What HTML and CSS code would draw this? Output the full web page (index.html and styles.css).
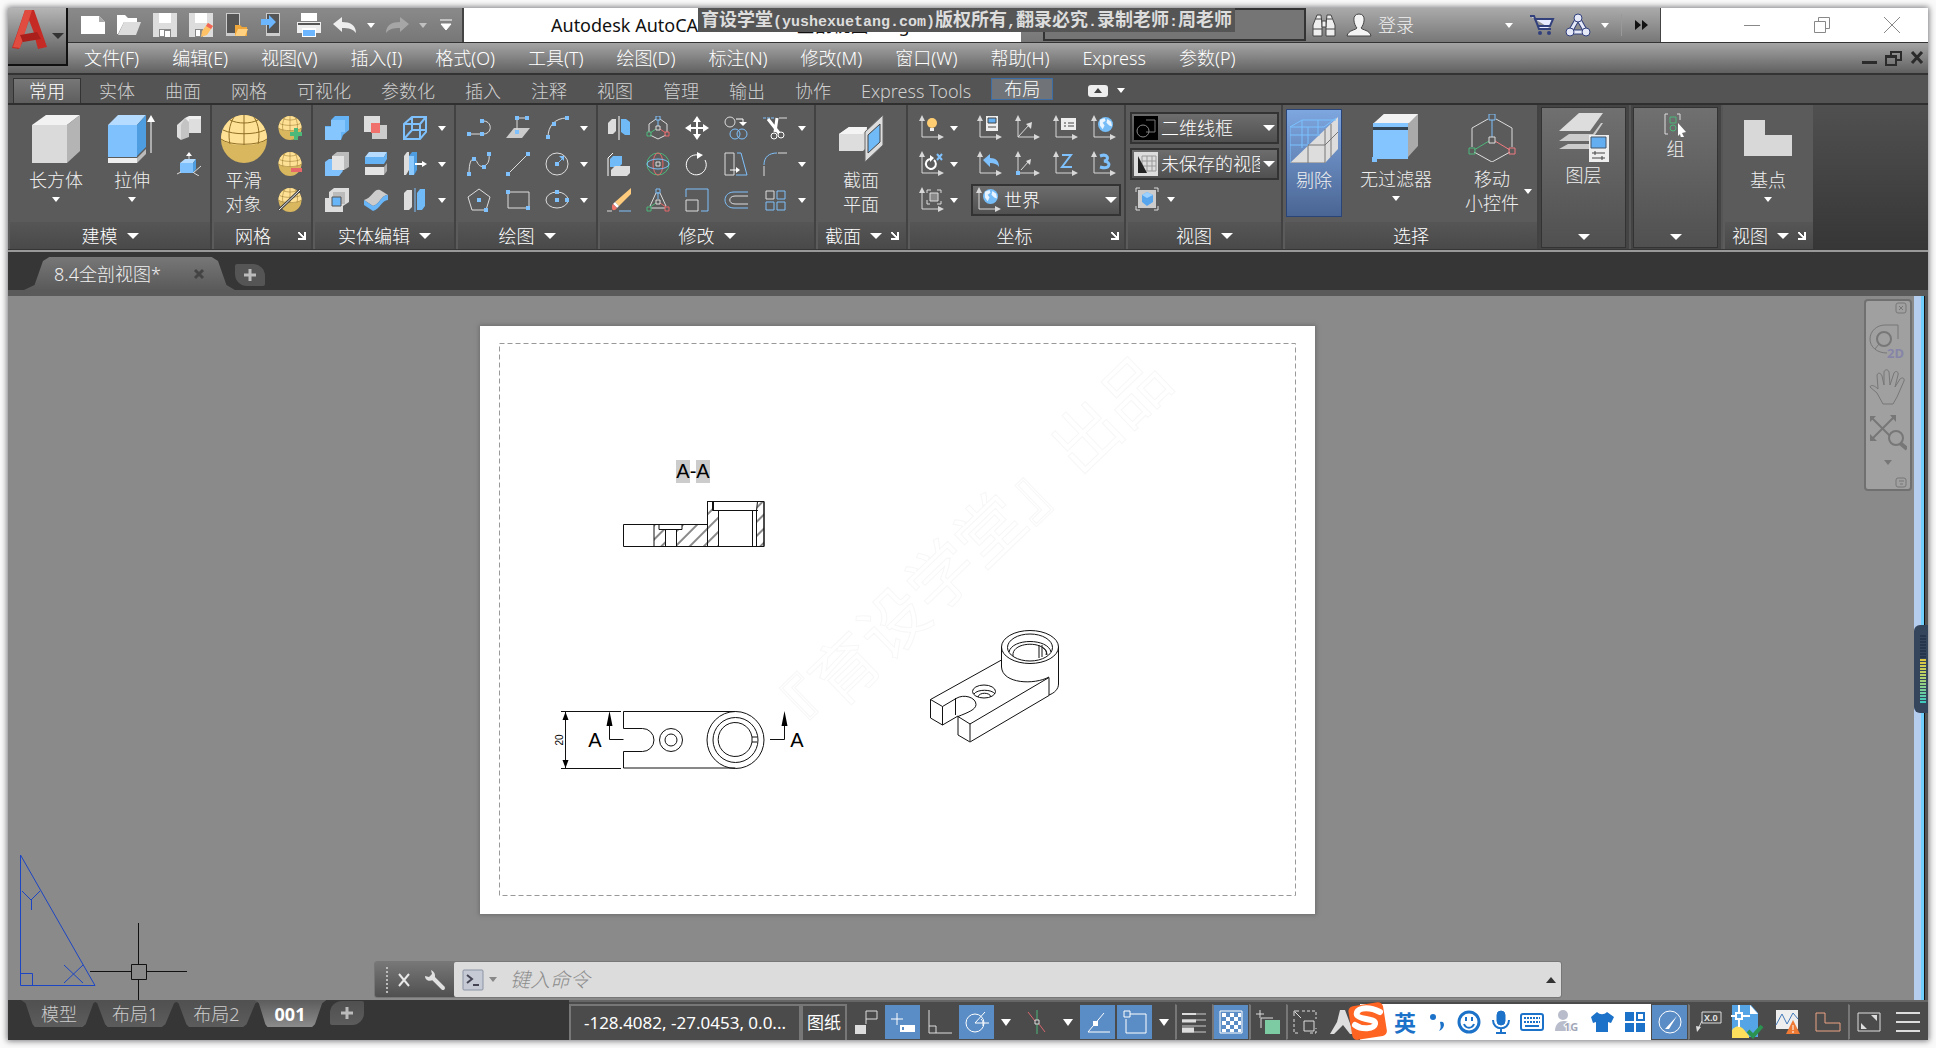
FILE: index.html
```html
<!DOCTYPE html>
<html lang="zh-CN">
<head>
    <meta charset="UTF-8">
    <meta name="viewport" content="width=device-width, initial-scale=1.0">
    <title>Autodesk AutoCAD 2020</title>
    <link rel="stylesheet" href="styles.css">
</head>
<body>
    <!-- shared icon parts -->
    <svg class="defs" width="0" height="0" aria-hidden="true">
        <symbol id="ball" viewBox="0 0 48 48">
            <ellipse cx="24" cy="24" rx="23" ry="24" fill="#d9b75f"/>
            <path d="M1 24C1 10 12 0 24 0s23 10 23 24c-4 4-12 6-23 6S5 28 1 24z" fill="#ffe196"/>
            <path d="M24 0v30M10 5c8 4 20 4 28 0M3 15c10 5 32 5 42 0M1 24c8 7 38 7 46 0M14 2C9 10 8 20 10 29M34 2c5 8 6 18 4 27" fill="none" stroke="#8f6f25" stroke-width="1"/>
        </symbol>
        <symbol id="axes" viewBox="0 0 26 26">
            <path d="M4 5v17h17" fill="none" stroke="#d8d8d8" stroke-width="1"/>
            <path d="M4 0l3 6H1zM26 22l-6-3v6z" fill="#d8d8d8"/>
        </symbol>
        <symbol id="globe" viewBox="0 0 16 16">
            <circle cx="8" cy="8" r="8" fill="#76bdf7"/>
            <path d="M2 3l5-2 1 3-3 2 2 3-2 4-3-4zM10 2l4 3 1 5-3-1-3-3z" fill="#e8f4ff"/>
        </symbol>
    </svg>

    <div class="app">
        <button class="app-menu" aria-label="应用程序菜单">
            <svg width="36" height="42" viewBox="0 0 36 42"><path d="M13 1h9l13 37-9 2-3-11-12 3-4 8-7-1z" fill="#c52b24"/><path d="M17 11l-6 17 11-4z" fill="#8b8b8b"/><path d="M13 1h7L8 39l-7-1z" fill="#e14c40"/><path d="M8 26l17-3 4 7-18 3z" fill="#a81f1c"/></svg>
            <span class="caret dark"></span>
        </button>

        <header class="titlebar">
            <div class="quick">
                <button class="tool" aria-label="新建"><svg width="24" height="24"><path d="M0 3h18l6 6v12H0z" fill="#fff"/><path d="M18 3v6h6z" fill="#aaa"/></svg></button>
                <button class="tool" aria-label="打开"><svg width="24" height="24"><path d="M0 2h8l3 3h9v4H7L1 21H0z" fill="#fff"/><path d="M7 9h17l-5 13H1z" fill="#ddd"/></svg></button>
                <button class="tool" aria-label="保存"><svg width="24" height="24"><path d="M0 0h24v24H0z" fill="#ddd"/><path d="M6 0h12v10H6z" fill="#fff"/><path d="M6 16h12v8H6z" fill="#888"/><path d="M7 17h4v6H7zM12 18h5v6h-5z" fill="#fff"/></svg></button>
                <button class="tool" aria-label="另存为"><svg width="24" height="24"><path d="M0 0h24v24H0z" fill="#ddd"/><path d="M6 0h12v10H6z" fill="#fff"/><path d="M6 16h8v8H6z" fill="#888"/><path d="M7 17h4v6H7z" fill="#fff"/><path d="M19 10l5 3-6 9-6 2 1-6z" fill="#ffc266"/><path d="M19 10l5 3-2 3-5-3z" fill="#f0645a"/></svg></button>
                <button class="tool" aria-label="从移动设备打开"><svg width="24" height="24"><path d="M1 0h14v23H1z" fill="#ccc"/><path d="M2 1h12v19H2z" fill="#555"/><path d="M10 12h5l2 2h5v9H10z" fill="#eea63a"/><path d="M13 16h10l-3 7H10z" fill="#ffd080"/></svg></button>
                <button class="tool" aria-label="保存到移动设备"><svg width="24" height="24"><path d="M5 0h14v23H5z" fill="#ccc"/><path d="M6 1h12v19H6z" fill="#555"/><path d="M0 6h8V2l7 7-7 7v-4H0z" fill="#6bb6ff"/></svg></button>
                <button class="tool" aria-label="打印"><svg width="24" height="24"><path d="M4 0h16v8H4z" fill="#fff"/><path d="M0 9h24v11H0z" fill="#eee"/><path d="M1 10h22v2H1z" fill="#555"/><path d="M5 15h14v9H5z" fill="#fff"/><path d="M6 17h12v6H6z" fill="#6bb6ff"/></svg></button>
                <button class="tool" aria-label="放弃"><svg width="24" height="24"><path d="M0 11l9-7v5c8 0 14 3 14 11-3-4-7-5-14-5v4z" fill="#eee"/></svg></button>
                <span class="caret"></span>
                <button class="tool" aria-label="重做"><svg width="24" height="24"><path d="M24 11l-9-7v5C7 9 1 12 1 20c3-4 7-5 14-5v4z" fill="#a6a6a6"/></svg></button>
                <span class="caret dim"></span>
                <button class="tool narrow" aria-label="自定义快速访问工具栏"><svg width="12" height="14"><path d="M0 2h12M1 6h10l-5 6z" stroke="#fff" fill="#fff"/></svg></button>
            </div>
            <h1 class="title">Autodesk AutoCAD 2020&nbsp;&nbsp; 8.4全剖视图.dwg</h1>
            <div class="search"><input type="search" aria-label="搜索"></div>
            <div class="account">
                <button class="tool" aria-label="查找"><svg width="24" height="24"><g fill="#eee" stroke="#444"><path d="M5 2h4l1 9v12H1V12zM19 2h-4l-1 9v12h9V12z"/><path d="M10 8h4v6h-4zM1 16h9M14 16h9M4 6h6M14 6h6" /></g></svg></button>
                <button class="login"><svg width="26" height="24"><path d="M13 1c8 0 5 11 2 14 1 2 9 2 10 8H1c1-6 9-6 10-8C8 12 5 1 13 1z" fill="#f4f4f4" stroke="#444"/></svg>登录</button>
                <span class="caret push"></span>
                <button class="tool" aria-label="应用商店"><svg width="26" height="24"><path d="M1 3h4l5 13h12M6 6h18l-3 7H9z" fill="#e8ebff" stroke="#32407c" stroke-width="2"/><circle cx="11" cy="20" r="2" fill="#32407c"/><circle cx="20" cy="20" r="2" fill="#32407c"/></svg></button>
                <button class="tool" aria-label="A360"><svg width="26" height="24" fill="none"><path d="M13 5L5 19h16z" stroke="#32407c" stroke-width="5" stroke-linejoin="round"/><path d="M13 5L5 19h16z" stroke="#e6e9f7" stroke-width="3" stroke-linejoin="round"/><g fill="#e6e9f7" stroke="#32407c"><circle cx="13" cy="5" r="4"/><circle cx="5" cy="19" r="4"/><circle cx="21" cy="19" r="4"/></g></svg></button>
                <span class="caret"></span>
                <span class="rule"></span>
                <button class="tool" aria-label="更多"><svg width="14" height="10"><path d="M1 0l6 5-6 5zM8 0l6 5-6 5z" fill="#111"/></svg></button>
            </div>
            <div class="window-buttons">
                <button aria-label="最小化"><svg width="16" height="16"><path d="M0 8.500h16" stroke="#888"/></svg></button>
                <button aria-label="还原"><svg width="16" height="16"><path d="M.5 4.500h11v11H.5zM4.500 4V.5h11v11H12" fill="none" stroke="#888"/></svg></button>
                <button aria-label="关闭"><svg width="16" height="16"><path d="M0 0l16 16M16 0L0 16" stroke="#888"/></svg></button>
            </div>
        </header>
        <p class="notice">育设学堂<span>(yushexuetang.com)</span>版权所有<span>,</span>翻录必究<span>.</span>录制老师<span>:</span>周老师</p>

        <nav class="menubar">
            <button>文件(F)</button><button>编辑(E)</button><button>视图(V)</button><button>插入(I)</button><button>格式(O)</button><button>工具(T)</button><button>绘图(D)</button><button>标注(N)</button><button>修改(M)</button><button>窗口(W)</button><button>帮助(H)</button><button>Express</button><button>参数(P)</button>
            <div class="doc-buttons">
                <button aria-label="最小化文档"><svg width="16" height="16"><path d="M0 11h15v3H0z" fill="#2b2b2b"/></svg></button>
                <button aria-label="还原文档"><svg width="18" height="16"><path d="M1 6h10v9H1zM6 6V2h10v8h-4M1 7h10M6 2h10" fill="none" stroke="#2b2b2b" stroke-width="2"/></svg></button>
                <button aria-label="关闭文档"><svg width="14" height="16"><path d="M2 2l10 11M12 2L2 13" stroke="#2b2b2b" stroke-width="3"/></svg></button>
            </div>
        </nav>

        <nav class="tabs">
            <button class="current">常用</button><button>实体</button><button>曲面</button><button>网格</button><button>可视化</button><button>参数化</button><button>插入</button><button>注释</button><button>视图</button><button>管理</button><button>输出</button><button>协作</button><button>Express Tools</button><button class="context">布局</button>
            <button class="fold" aria-label="最小化功能区"><svg width="22" height="12"><rect width="20" height="12" rx="3" fill="#eee"/><path d="M10 3l4 5H6z" fill="#444"/></svg><span class="caret"></span></button>
        </nav>

        <div class="ribbon">
            <section class="panel modeling">
                <div class="panel-body">
                    <button class="big"><svg width="48" height="48"><path d="M0 10L14 0h34L35 10z" fill="#f2f2f2"/><path d="M0 10h35v38H0z" fill="#dadada"/><path d="M35 10L48 0v36L35 48z" fill="#b4b4b4"/></svg>长方体<span class="caret"></span></button>
                    <button class="big"><svg width="48" height="48"><path d="M0 10L10 0h28L29 10z" fill="#b5dcff"/><path d="M0 10h29v32H0z" fill="#7fc1fc"/><path d="M29 10l9-10v32l-9 9z" fill="#4e9de0"/><path d="M0 43h29v5H0z" fill="#eee"/><path d="M29 43l9-9v5l-9 9z" fill="#bbb"/><path d="M43 6v32" stroke="#fff" stroke-width="1"/><path d="M43 0l4 7h-8z" fill="#fff"/></svg>拉伸<span class="caret"></span></button>
                    <div class="icons one">
                        <button class="tool" aria-label="多段体"><svg width="24" height="24"><path d="M0 9l8-7v12L4 17v7l-4-3z" fill="#ddd"/><path d="M8 2L12 0h12v13H8z" fill="#efefef"/><path d="M8 2l4 4v15l-8 3V9z" fill="#c4c4c4"/><path d="M12 3h12v14H12z" fill="#dedede"/></svg></button>
                        <button class="tool" aria-label="按住并拖动"><svg width="24" height="24"><path d="M3 11l5-4h11l-3 4z" fill="#b5dcff"/><path d="M3 11h13v10H3z" fill="#7fc1fc"/><path d="M16 11l3-4v10l-3 4z" fill="#4e9de0"/><path d="M12 7V2M0 22l4-2M16 21l8-7M17 21l5 3" stroke="#ddd"/><path d="M12 0l3 4H9z" fill="#fff"/></svg></button>
                    </div>
                </div>
                <footer>建模 <span class="caret"></span></footer>
            </section>
            <section class="panel mesh">
                <div class="panel-body">
                    <button class="big"><svg width="48" height="48"><use href="#ball"/></svg><span>平滑<br>对象</span></button>
                    <div class="icons one">
                        <button class="tool" aria-label="提高平滑度"><svg width="24" height="24"><use href="#ball"/><path d="M18 12v12M12 18h12" stroke="#4cb87a" stroke-width="4"/></svg></button>
                        <button class="tool" aria-label="降低平滑度"><svg width="24" height="24"><use href="#ball"/><path d="M13 18h11" stroke="#e8686a" stroke-width="4"/></svg></button>
                        <button class="tool" aria-label="取消平滑"><svg width="24" height="24"><use href="#ball"/><path d="M1 22L22 2" stroke="#444" stroke-width="3"/><path d="M1 22L22 2" stroke="#eee"/></svg></button>
                    </div>
                </div>
                <footer class="ends">网格 <span class="end"><button class="launcher" aria-label="网格选项"></button></span></footer>
            </section>
            <section class="panel solid">
                <div class="panel-body">
                    <div class="icons three">
                        <button class="tool" aria-label="并集"><svg width="24" height="24"><path d="M6 4l4-4h14v14l-6 5-2 5H0V10h6z" fill="#65b2f5"/><path d="M6 4h14v12h-4v8H0V11h6z" fill="#86c6ff"/></svg></button>
                        <button class="tool" aria-label="干涉"><svg width="24" height="24"><path d="M0 0h16v16H0z" fill="#ddd"/><path d="M8 9h15v14H8z" fill="#ccc"/><path d="M7 7h9v10H7z" fill="#f0706c"/></svg></button>
                        <button class="tool" aria-label="提取边"><svg width="24" height="24"><path d="M1 8l8-7h14v15l-6 7H1zM1 8h16v15M17 8l6-7M9 1v13L1 23M9 14h14" fill="none" stroke="#7fc1fc" stroke-width="2"/></svg></button>
                        <span class="caret"></span>
                        <button class="tool" aria-label="差集"><svg width="24" height="24"><path d="M0 10l4-3h8l6 12-4 5H0z" fill="#7fc1fc"/><path d="M7 4l5-4h12v15l-5 3H7z" fill="#bbb"/><path d="M7 4h12v14H7z" fill="#e3e3e3"/></svg></button>
                        <button class="tool" aria-label="剖切"><svg width="24" height="24"><path d="M1 5l4-5h18l-3 5z" fill="#b5dcff"/><path d="M1 5h19v7H1zM20 5l3-5v7l-3 5z" fill="#65b2f5"/><path d="M1 15h19v8H1z" fill="#e3e3e3"/><path d="M20 15l3-4v8l-3 4z" fill="#aaa"/></svg></button>
                        <button class="tool" aria-label="拉伸面"><svg width="24" height="24"><path d="M1 4l3-4h2v18l-3 5H1z" fill="#ddd"/><path d="M6 4l3-4h5v18l-3 5H6z" fill="#4e9de0"/><path d="M6 4h5v19H6z" fill="#8bc9ff"/><path d="M12 12h8" stroke="#fff" stroke-width="2"/><path d="M19 9l5 3-5 3z" fill="#fff"/></svg></button>
                        <span class="caret"></span>
                        <button class="tool" aria-label="交集"><svg width="24" height="24"><path d="M0 10h4V4l5-4h15v14l-6 4v6H0z" fill="#ddd"/><path d="M8 4h12v12H8z" fill="#bbb"/><path d="M7 9h9v9H7z" fill="#68b5f7" stroke="#555"/></svg></button>
                        <button class="tool" aria-label="加厚"><svg width="24" height="24"><path d="M0 12C8 10 10 0 16 2l8 5C18 6 16 16 9 18z" fill="#ccc"/><path d="M0 12l9 6C16 16 18 6 24 7v5c-6 0-8 9-15 11L0 17z" fill="#68b5f7"/></svg></button>
                        <button class="tool" aria-label="分割"><svg width="24" height="24"><path d="M1 5l3-3h5v17l-3 3H1z" fill="#ddd"/><path d="M14 5l3-4h5v17l-3 4h-5z" fill="#70baf8"/><path d="M12 0v24" stroke="#7fc1fc"/></svg></button>
                        <span class="caret"></span>
                    </div>
                </div>
                <footer>实体编辑 <span class="caret"></span></footer>
            </section>
            <section class="panel draw">
                <div class="panel-body">
                    <div class="icons three line">
                        <button class="tool" aria-label="多段线"><svg width="24" height="24"><path d="M1 18h14M15 5c11-1 11 14 0 13"/><path class="dot" d="M0 16h4v4H0zM13 16h4v4h-4zM13 3h4v4h-4z"/></svg></button>
                        <button class="tool" aria-label="三维多段线"><svg width="24" height="24"><path d="M8 12h16l-8 10H0z" fill="#ccc" stroke="none"/><path d="M11 16V2h10"/><path class="dot" d="M9 0h4v4H9zM19 0h4v4h-4zM9 14h4v4H9z"/></svg></button>
                        <button class="tool" aria-label="圆弧"><svg width="24" height="24"><path d="M3 21C3 10 10 2 22 2"/><path class="dot" d="M1 19h4v4H1zM7 6h4v4H7zM20 0h4v4h-4z"/></svg></button>
                        <span class="caret"></span>
                        <button class="tool" aria-label="样条曲线"><svg width="24" height="24"><path d="M2 22C2 3 8 6 10 10s4 5 7 4 6-4 5-12"/><path class="dot" d="M0 20h4v4H0zM5 5h4v4H5zM15 13h4v4h-4zM20 0h4v4h-4z"/></svg></button>
                        <button class="tool" aria-label="直线"><svg width="24" height="24"><path d="M2 22L22 2"/><path class="dot" d="M0 20h4v4H0zM20 0h4v4h-4z"/></svg></button>
                        <button class="tool" aria-label="圆"><svg width="24" height="24"><circle cx="12" cy="12" r="11"/><path d="M13 11l5-5" stroke="#7fc1fc"/><path class="dot" d="M10 10h4v4h-4zM19 4v5l-5-5z"/></svg></button>
                        <span class="caret"></span>
                        <button class="tool" aria-label="多边形"><svg width="24" height="24"><path d="M12 1l11 8-4 13H5L1 9z"/><path class="dot" d="M10 10h4v4h-4zM17 20h4v4h-4z"/></svg></button>
                        <button class="tool" aria-label="矩形"><svg width="24" height="24"><path d="M2 4h21v16H2z"/><path class="dot" d="M0 2h4v4H0zM20 18h4v4h-4z"/></svg></button>
                        <button class="tool" aria-label="椭圆"><svg width="24" height="24"><ellipse cx="12" cy="12" rx="11" ry="8"/><path class="dot" d="M10 2h4v4h-4zM10 10h4v4h-4zM20 10h4v4h-4z"/></svg></button>
                        <span class="caret"></span>
                    </div>
                </div>
                <footer>绘图 <span class="caret"></span></footer>
            </section>
            <section class="panel modify">
                <div class="panel-body">
                    <div class="icons five line">
                        <button class="tool" aria-label="三维镜像"><svg width="24" height="24"><g stroke="none"><path d="M1 7l4-4h4v12l-3 3H1z" fill="#ddd"/><path d="M14 3h5l4 3v13h-5l-4-3z" fill="#70baf8"/></g><path d="M12 0v24" stroke="#fff"/></svg></button>
                        <button class="tool" aria-label="三维移动"><svg width="24" height="24"><path d="M10 3L3 8v8M14 3l7 5v8M4 19l8 4 8-4"/><path d="M12 4v6M10 0h4v4h-4z" stroke="#7fc1fc"/><path d="M10 13l-6 4M1 16h4v4H1z" stroke="#4cb87a"/><path d="M14 13l6 4M19 16h4v4h-4z" stroke="#e8686a"/><path d="M10 10h4v4h-4z"/></svg></button>
                        <button class="tool" aria-label="移动"><svg width="24" height="24"><path d="M12 3v18M3 12h18" stroke="#fff" stroke-width="2"/><path d="M12 0l4 6H8zM12 24l4-6H8zM0 12l6-4v8zM24 12l-6-4v8z" fill="#fff" stroke="none"/></svg></button>
                        <button class="tool" aria-label="复制"><svg width="24" height="24"><circle cx="6" cy="6" r="5"/><path d="M12 3h7v4" stroke="#fff"/><path d="M19 10l-4-4h8z" fill="#fff" stroke="none"/><g stroke="#7fc1fc"><circle cx="11" cy="18" r="5"/><circle cx="18" cy="18" r="5"/></g></svg></button>
                        <button class="tool" aria-label="修剪"><svg width="24" height="24"><path d="M0 2h12" stroke="#7fc1fc" stroke-dasharray="3 1"/><path d="M16 2h8"/><path d="M5 3l11 14M14 2l-2 14" stroke="#fff" stroke-width="3"/><circle cx="11" cy="20" r="3" stroke="#fff"/><circle cx="18" cy="19" r="3" stroke="#fff"/></svg></button>
                        <span class="caret"></span>
                        <button class="tool" aria-label="三维对齐"><svg width="24" height="24"><g stroke="none"><path d="M3 7l3-3h9v8l-3 3H3z" fill="#70baf8"/><path d="M4 18l4-4h15v7l-3 3H4z" fill="#ddd"/></g><path d="M1 24V6l5-5" stroke="#fff"/></svg></button>
                        <button class="tool" aria-label="三维旋转"><svg width="24" height="24"><circle cx="12" cy="12" r="11" stroke="#4cb87a"/><ellipse cx="12" cy="12" rx="5" ry="11" stroke="#e8686a"/><ellipse cx="12" cy="12" rx="11" ry="5" stroke="#7fc1fc"/><path d="M10 10h4v4h-4z"/></svg></button>
                        <button class="tool" aria-label="旋转"><svg width="24" height="24"><path d="M20 8a10 10 0 1 1-7-5" stroke="#fff"/><path d="M12 0l6 3-6 4z" fill="#fff" stroke="none"/></svg></button>
                        <button class="tool" aria-label="拉伸图形"><svg width="24" height="24"><path d="M1 1h9v22H1z"/><path d="M13 1h4l6 22H12" stroke="#7fc1fc"/><path d="M6 18h7" stroke="#fff"/><path d="M12 15l4 3-4 3z" fill="#fff" stroke="none"/></svg></button>
                        <button class="tool" aria-label="圆角"><svg width="24" height="24"><path d="M1 14v10M15 1h9"/><path d="M1 13C1 5 6 1 14 1" stroke="#7fc1fc"/></svg></button>
                        <span class="caret"></span>
                        <button class="tool" aria-label="删除"><svg width="24" height="24"><g stroke="none"><path d="M24 0v6L12 18l-4-4z" fill="#ffcb7d"/><path d="M8 14l4 4-2 2-4-4z" fill="#fff"/><path d="M6 16l4 4c-2 3-5 3-5 0s0-3 1-4z" fill="#ef7469"/></g><path d="M0 23h5"/><path d="M12 23h12" stroke="#7fc1fc"/></svg></button>
                        <button class="tool" aria-label="三维缩放"><svg width="24" height="24"><path d="M10 5L4 18M14 5l6 13M5 20h14"/><path d="M12 4v7M10 1h4v4h-4z" stroke="#7fc1fc"/><path d="M10 15l-6 4M1 19h4v4H1z" stroke="#4cb87a"/><path d="M14 15l6 4M19 19h4v4h-4z" stroke="#e8686a"/><path d="M10 12h4v4h-4z"/></svg></button>
                        <button class="tool" aria-label="缩放"><svg width="24" height="24"><path d="M1 12h12v11H1z"/><path d="M1 9V1h22v22h-7" stroke="#7fc1fc"/></svg></button>
                        <button class="tool" aria-label="偏移"><svg width="24" height="24"><path d="M24 4H10C-2 4-2 20 10 20h14" stroke="#7fc1fc"/><path d="M24 8H11C4 8 4 16 11 16h13"/></svg></button>
                        <button class="tool" aria-label="阵列"><svg width="24" height="24"><path d="M3 3h8v8H3z"/><path d="M14 3h8v8h-8zM3 14h8v8H3zM14 14h8v8h-8z" stroke="#7fc1fc"/></svg></button>
                        <span class="caret"></span>
                    </div>
                </div>
                <footer>修改 <span class="caret"></span></footer>
            </section>
            <section class="panel section-plane">
                <div class="panel-body">
                    <button class="big"><svg width="48" height="48"><path d="M2 19l10-7h18v20l-4 4H2z" fill="#ddd"/><path d="M2 19l10-7h18l-4 7z" fill="#f4f4f4"/><path d="M28 17L46 0v30L28 47z" fill="#ddd" stroke="#666"/><path d="M31 20L43 9v18L31 38z" fill="#70baf8" stroke="#444"/></svg><span>截面<br>平面</span></button>
                </div>
                <footer>截面 <span class="caret"></span> <button class="launcher" aria-label="截面选项"></button></footer>
            </section>
            <section class="panel ucs">
                <div class="panel-body">
                    <div class="icons coords">
                        <button class="tool" aria-label="UCS 图标"><svg width="26" height="26"><use href="#axes"/><circle cx="14" cy="8" r="5" fill="#ffce73"/><path d="M12 13h4v3h-4z" fill="#eee"/></svg></button>
                        <span class="caret"></span>
                        <button class="tool" aria-label="UCS 特性"><svg width="26" height="26"><use href="#axes"/><path d="M10 1h12v15H10z" fill="#eee"/><path d="M12 3h8v5h-8z" fill="#62aef0" stroke="#444"/><path d="M12 12h8" stroke="#444"/></svg></button>
                        <button class="tool" aria-label="原点"><svg width="26" height="26"><use href="#axes"/><path d="M4 22l11-12" stroke="#ddd"/><path d="M18 7l-1 7-5-5z" fill="#ddd"/></svg></button>
                        <button class="tool" aria-label="命名 UCS"><svg width="26" height="26"><use href="#axes"/><path d="M9 3h15v12H9z" fill="#eee"/><path d="M12 8h2M16 8h6M12 11h2M16 11h6" stroke="#444"/></svg></button>
                        <button class="tool" aria-label="世界坐标"><svg width="26" height="26"><use href="#axes"/><use href="#globe" x="8" y="2" width="15" height="15"/></svg></button>
                        <button class="tool" aria-label="绕 X 轴旋转"><svg width="26" height="26"><use href="#axes"/><path d="M16 9a5 5 0 1 1-4-1" fill="none" stroke="#fff" stroke-width="2"/><path d="M12 4l4 3-4 4z" fill="#fff"/><path d="M19 3l5 6M24 3l-5 6" stroke="#7fc1fc" stroke-width="2"/></svg></button>
                        <span class="caret"></span>
                        <button class="tool" aria-label="上一个 UCS"><svg width="26" height="26"><use href="#axes"/><path d="M7 9l7-6v4c6 0 9 3 9 9-2-3-5-4-9-4v4z" fill="#7fc1fc"/></svg></button>
                        <button class="tool" aria-label="Z 轴矢量"><svg width="26" height="26"><use href="#axes"/><path d="M7 19l8-9" stroke="#ddd"/><path d="M17 8l-1 6-4-4z" fill="#ddd"/><path d="M2 20h4v4H2z" fill="#7fc1fc"/></svg></button>
                        <button class="tool" aria-label="Z"><svg width="26" height="26"><use href="#axes"/><path d="M10 4h9L10 16h10" fill="none" stroke="#7fc1fc" stroke-width="2"/></svg></button>
                        <button class="tool" aria-label="三点"><svg width="26" height="26"><use href="#axes"/><path d="M10 5c8-3 10 4 4 5 8 1 6 9-4 6" fill="none" stroke="#7fc1fc" stroke-width="3"/></svg></button>
                        <button class="tool" aria-label="视图 UCS"><svg width="26" height="26"><use href="#axes"/><path d="M12 6h8v8h-8z" fill="#888" stroke="#ddd"/><path d="M9 6V3h4M19 3h4v3M23 14v3h-4M9 13v4h3" fill="none" stroke="#ddd"/></svg></button>
                        <span class="caret"></span>
                        <div class="combo"><svg width="26" height="26"><use href="#axes"/><use href="#globe" x="8" y="2" width="15" height="15"/></svg><select aria-label="坐标系"><option>世界</option></select><span class="caret"></span></div>
                    </div>
                </div>
                <footer class="ends">坐标 <span class="end"><button class="launcher" aria-label="坐标选项"></button></span></footer>
            </section>
            <section class="panel view">
                <div class="panel-body">
                    <div class="combo"><svg width="24" height="24"><path d="M0 0h24v24H0z"/><path d="M12 4h9v12h-9" fill="none" stroke="#777"/><circle cx="9" cy="15" r="6" fill="none" stroke="#888"/></svg><select aria-label="视觉样式"><option>二维线框</option></select><span class="caret"></span></div>
                    <div class="combo"><svg width="24" height="24"><path d="M0 0h24v24H0z" fill="#ddd"/><path d="M8 4h14v15H8zM8 9h14M8 14h14M13 4v15M18 4v15" fill="none" stroke="#999"/><path d="M4 4v17h9z" fill="#222"/></svg><select aria-label="已保存的视图"><option>未保存的视图</option></select><span class="caret"></span></div>
                    <div class="with-caret"><button class="tool" aria-label="视口配置"><svg width="24" height="24"><path d="M1 5V1h4M19 1h4v4M23 19v4h-4M5 23H1v-4" fill="none" stroke="#ddd"/><path d="M3 3h18v18H3z" fill="#ccc"/><path d="M7 8l5-3 6 3v7l-6 4-5-4z" fill="#57a6ed"/><path d="M7 8l5-3 6 3-6 3z" fill="#9cd1ff"/></svg></button><span class="caret"></span></div>
                </div>
                <footer>视图 <span class="caret"></span></footer>
            </section>
            <section class="panel selection">
                <div class="panel-body">
                    <button class="big pressed"><svg width="48" height="48"><path d="M0 48L48 2v32L35 48z" fill="#ddd"/><path d="M18 30v18M0 48h35V14M18 30h17M35 30L48 17M41 9v33" stroke="#777" fill="none"/><path d="M0 48V12L12 5h34M0 12h34L46 3M18 12v17M0 30h18M0 20h30M12 5v28M28 5v14" stroke="#7ac2ff" fill="none"/></svg>剔除</button>
                    <button class="big"><svg width="48" height="48"><path d="M2 9l10-9h34v32L36 43H2z" fill="#aaa"/><path d="M2 9l10-9h34l-9 9z" fill="#f2f2f2"/><path d="M1 9h35v36H1z" fill="#84c5ff"/><path d="M1 13h35v3H1z" fill="#345"/><path d="M0 43h5v5H0z" fill="#7fc1fc"/></svg>无过滤器<span class="caret"></span></button>
                    <button class="big gizmo"><svg width="48" height="48" fill="none" stroke="#ddd"><path d="M20 5L4 14v19M28 5l16 9v19M6 38l18 10 18-10"/><path d="M24 6v17M21 0h6v6h-6z" stroke="#7fc1fc"/><path d="M21 27L6 36M1 34h6v6H1z" stroke="#4cb87a"/><path d="M27 27l15 9M41 34h6v6h-6z" stroke="#f07a80"/><path d="M21 23h6v6h-6z"/></svg><span>移动<br>小控件</span><span class="caret"></span></button>
                </div>
                <footer>选择</footer>
            </section>
            <section class="panel folded">
                <button><svg width="50" height="50"><path d="M20 0h24L31 18H0z" fill="#ddd"/><path d="M10 21h24l8-11h2L32 28H0zM9 31h25v5H0z" fill="#ccc"/><path d="M30 22h20v27H30z" fill="#eee"/><path d="M32 24h15v11H32z" fill="#62aef0" stroke="#456"/><path d="M33 40h13M33 45h13M36 38v4M43 43v4" stroke="#444"/></svg>图层<span class="caret"></span></button>
            </section>
            <section class="panel folded">
                <button><svg width="24" height="24"><path d="M4 1H1v20h3M13 1h3v6" fill="none" stroke="#ddd"/><path d="M6 4h6v6H6z" fill="none" stroke="#4cb87a"/><circle cx="9" cy="15" r="3" fill="none" stroke="#4cb87a"/><path d="M14 10l8 9-4 1 2 4-3 1-1-4-2 2z" fill="#fff"/></svg>组<span class="caret"></span></button>
            </section>
            <section class="panel base">
                <div class="panel-body">
                    <button class="big"><svg width="48" height="48"><path d="M0 5h21v15h27v21H0z" fill="#d8d8d8"/></svg>基点<span class="caret"></span></button>
                </div>
                <footer>视图 <span class="caret"></span> <button class="launcher" aria-label="视图选项"></button></footer>
            </section>
        </div>

        <div class="file-tabs">
            <div class="file-tab"><button>8.4全剖视图*</button><button class="close" aria-label="关闭图形"><svg width="12" height="12"><path d="M2 2l8 8M10 2l-8 8" stroke="#444" stroke-width="3"/></svg></button></div>
            <button class="new-tab" aria-label="新图形"><svg width="12" height="12"><path d="M6 0v12M0 6h12" stroke="#bbb" stroke-width="3"/></svg></button>
        </div>

        <main class="canvas">
            <svg class="paper" width="835" height="588" viewBox="480 326 835 588" fill="none" stroke="#111">
                <defs>
                    <pattern id="hatch" width="10" height="10" patternUnits="userSpaceOnUse" patternTransform="rotate(45)"><path d="M4 0v10" stroke="#111"/></pattern>
                </defs>
                <rect x="480" y="326" width="835" height="588" fill="#fff" stroke="none"/>
                <text class="stamp" transform="translate(845 670) rotate(-44)" x="-100" y="24">『育设学堂』出品</text>
                <rect x="499.500" y="343.500" width="796" height="552" stroke="#999" stroke-dasharray="5 3"/>

                <!-- section A-A -->
                <path d="M676 460h14v23h-14zM696 460h14v23h-14z" fill="#ccc" stroke="none"/>
                <text class="mark" x="693" y="478">A-A</text>
                <path d="M654 524.500h5v5h6.500v17H654zM682 524.500h25.500v22H676.500v-17h5.500zM707.500 501.500h5v9h6v36h-11zM757.500 501.500h6.500v45h-7.500v-36z" fill="url(#hatch)"/>
                <path d="M623.500 524.500h84v-23H764v45H623.500zM659.500 529.500h22.500M713.500 501.500v9h44.500M752.500 510.500v36M707.500 524.500v22"/>

                <!-- plan -->
                <path d="M735.500 711.500H623.500v17h19a11.500 11.500 0 0 1 0 23h-19v16.500h112"/>
                <circle cx="671" cy="740" r="11.500"/><circle cx="671" cy="740" r="6"/>
                <circle cx="735.500" cy="740" r="28.500"/><circle cx="735.500" cy="740" r="22.500"/>
                <path d="M752 737a17 17 0 1 0 0 5h5M752 737h5M752 737v5"/>
                <path d="M561 711.500h60M561 768.500h60M565.500 712v56M609.500 715v24.500h14M784.500 715v24.500H770"/>
                <path d="M565.500 712l3 8h-6zM565.500 768l3-8h-6zM609.500 711l3 15h-6zM784.500 711l3 15h-6z" fill="#000" stroke="none"/>
                <text class="mark" x="595" y="747">A</text>
                <text class="mark" x="797" y="747">A</text>
                <text class="size" transform="translate(563 740) rotate(-90)">20</text>

                <!-- isometric -->
                <ellipse cx="1030" cy="647" rx="28.500" ry="16.500"/><ellipse cx="1030" cy="647.500" rx="22.500" ry="13.500"/>
                <path d="M1009 652c3-14 39-14 42 0M1013 656c-2-15 34-16 34-1M1039 645v13M1042 645v12M1043 648c3 1 4 4 3 7M1001.500 647v20c1 17 33 18 47.500 10M1058.500 647v37c0 5-4 9-9.500 11"/>
                <path d="M1001.500 660l-71 39.500 12 7 13.500-8c8-5 20-1 20 6 0 5-8 8-18 12l12 7.500 79-46.500v18l-79 46.500-12-7v-19M970 723.500V741M930.500 699.500V718l12 7v-18.500M942.500 725l15.500-9M955.500 698v17"/>
                <ellipse cx="984" cy="691.500" rx="11.500" ry="6.500"/><path d="M974 694c3-5 18-5 21 0M978 697c1-5 12-5 13 0"/>
            </svg>

            <svg class="ucs-icon" width="190" height="160" viewBox="8 840 190 160" fill="none">
                <path d="M20.500 855v130.500H95zM20.500 973.500h12v12M22 891l9 9 9-9M31.500 900v10M64 965l19 18M83 965l-19 18" stroke="#1c45c4"/>
                <path d="M138.500 923v41M138.500 979v21M90 971.500h41M146 971.500h41M131.500 964.500h15v15h-15z" stroke="#111"/>
            </svg>

            <aside class="navbar">
                <button class="mini" aria-label="关闭导航栏"><svg width="12" height="12"><rect x="1" y="1" width="10" height="10" rx="2" fill="none" stroke="#777"/><path d="M4 4l4 4M8 4L4 8" stroke="#777"/></svg></button>
                <button aria-label="导航控制盘"><svg width="38" height="38"><path d="M16 3h13v14M18 31C8 31 1 25 1 17S8 3 16 3" fill="none" stroke="#777" stroke-width="1"/><circle cx="15" cy="17" r="7" fill="none" stroke="#777" stroke-width="2"/><path d="M10 22l-4 5" stroke="#777"/><text x="18" y="36" class="two-d">2D</text></svg></button>
                <button aria-label="平移"><svg width="38" height="38"><path d="M14 36L8 25 1 19c1-3 5-1 8 2L8 7c1-3 4-2 5 1l2 9V4c1-3 4-3 5 0l1 13 4-12c2-3 5-1 4 2l-3 12 5-8c2-2 5-1 4 2l-7 16-4 7z" fill="none" stroke="#777" stroke-width="1"/></svg></button>
                <button aria-label="范围缩放"><svg width="38" height="38"><path d="M3 4l22 22M25 3L3 25" stroke="#777" stroke-width="2"/><path d="M1 2h6L1 8zM27 1v7l-6-7zM1 20v7h7z" fill="#777"/><circle cx="27" cy="24" r="7" fill="#a0a0a0" stroke="#777" stroke-width="2"/><path d="M31 29l7 6" stroke="#777" stroke-width="4"/></svg></button>
                <span class="caret"></span>
                <button class="mini" aria-label="导航栏选项"><svg width="12" height="12"><rect x="1" y="2" width="10" height="9" rx="2" fill="none" stroke="#777"/><path d="M4 5h5M5 8h3" stroke="#777"/></svg></button>
            </aside>

            <div class="edge"><div class="meter"></div></div>

            <div class="command">
                <span class="grip"></span>
                <button aria-label="关闭命令行"><svg width="16" height="14"><path d="M3 1l10 12M13 1L3 13" stroke="#e8e8e8" stroke-width="2"/></svg></button>
                <button aria-label="自定义"><svg width="22" height="22"><path d="M9 9l10 10" stroke="#e0e0e0" stroke-width="4" stroke-linecap="round"/><path d="M7 1l1 4-3 3-4-1c0 4 4 6 8 4 3-2 3-8-2-10z" fill="#e0e0e0"/></svg></button>
                <div class="entry">
                    <svg width="22" height="22"><rect x="1" y="1" width="20" height="20" rx="1" fill="#c6cad4" stroke="#8b93a5"/><path d="M5 6l5 4-5 4" fill="none" stroke="#445" stroke-width="2"/><path d="M11 16h6" stroke="#445" stroke-width="2"/></svg>
                    <span class="caret mid"></span>
                    <input type="text" aria-label="命令" placeholder="键入命令">
                    <span class="caret up"></span>
                </div>
            </div>
        </main>

        <footer class="bottom">
            <nav class="layouts">
                <button>模型</button><button>布局1</button><button>布局2</button><button class="current">001</button>
                <button class="add" aria-label="新建布局"><svg width="12" height="12"><path d="M6 0v12M0 6h12" stroke="#bbb" stroke-width="3"/></svg></button>
            </nav>
            <div class="status">
                <button class="readout">-128.4082, -27.0453, 0.0...</button>
                <button class="space">图纸</button>
                <button aria-label="模型空间"><svg width="24" height="24"><path d="M12 1h11v8H12zM12 9v5" fill="none" stroke="#ddd"/><path d="M1 15h11v9H1z" fill="#ddd"/></svg></button>
                <button class="on" aria-label="动态输入"><svg width="24" height="24"><path d="M6 3v12M0 9h12" stroke="#fff"/><path d="M9 15h15v7H9z" fill="#fff"/><path d="M11 17h2v3h-2z" fill="#5a8cc5"/></svg></button>
                <button aria-label="正交"><svg width="24" height="24"><path d="M1 0v23h23M1 16h7v7" fill="none" stroke="#ddd"/></svg></button>
                <button class="on" aria-label="极轴追踪"><svg width="24" height="24"><circle cx="10" cy="13" r="9" fill="none" stroke="#fff"/><path d="M10 13h14M10 13L20 2M16 9c2 2 2 3 2 7" fill="none" stroke="#fff"/></svg></button>
                <span class="caret"></span>
                <button class="wide" aria-label="等轴测"><svg width="24" height="24"><path d="M12 0v10M12 14v10" stroke="#4cb87a"/><path d="M3 2l7 9M14 14l6 8" stroke="#d9666e"/><path d="M10 10h4v4h-4z" fill="none" stroke="#ddd"/></svg></button>
                <span class="caret"></span>
                <button class="on" aria-label="对象追踪"><svg width="24" height="24"><path d="M18 3L2 22h22" fill="none" stroke="#fff"/><path d="M7 11h5v5H7z" fill="#fff"/></svg></button>
                <button class="on" aria-label="对象捕捉"><svg width="24" height="24"><path d="M7 4h16v19H3V9M1 1h6v6H1z" fill="none" stroke="#fff"/></svg></button>
                <span class="caret"></span>
                <button class="split" aria-label="线宽"><svg width="24" height="24"><path d="M0 4h24M0 10h24M0 16h24M0 22h24" stroke="#ccc"/><path d="M0 4h14" stroke="#ddd" stroke-width="2"/><path d="M0 11h14" stroke="#ddd" stroke-width="3"/><path d="M0 20h12" stroke="#ddd" stroke-width="5"/></svg></button>
                <button class="on split" aria-label="透明度"><svg width="24" height="24"><path d="M1 1h22v22H1z" fill="none" stroke="#fff"/><path d="M3 3h4v4H3zM11 3h4v4h-4zM19 3h3v4h-3zM7 7h4v4H7zM15 7h4v4h-4zM3 11h4v4H3zM11 11h4v4h-4zM19 11h3v4h-3zM7 15h4v4H7zM15 15h4v4h-4zM3 19h4v3H3zM11 19h4v3h-4zM19 19h3v3h-3z" fill="#fff"/></svg></button>
                <button class="split" aria-label="选择循环"><svg width="24" height="24"><path d="M4 0v8M0 4h8M5 8v10M5 8h12" stroke="#ddd"/><path d="M9 10h15v14H9z" fill="#7ccba2"/></svg></button>
                <button class="split" aria-label="三维对象捕捉"><svg width="24" height="24"><path d="M9 1h14v8M1 9v14h6M17 23h6v-5" fill="none" stroke="#ddd" stroke-dasharray="3 2"/><path d="M11 11h10v10H11zM2 2l6 6M1 6V1h5" fill="none" stroke="#ddd"/></svg></button>
                <button aria-label="注释"><svg width="24" height="24"><path d="M10 0h5l9 24h-4l-7-9-9 9H0l7-12z" fill="#ddd"/></svg></button>
                <div class="ime">
                    <svg class="logo" width="46" height="40"><rect x="4" y="4" width="35" height="34" rx="5" fill="#ff6423" transform="rotate(-9 22 20)"/><path d="M34 12c-14-7-25-3-23 3 2 5 19 3 18 9-1 5-13 6-20 1" fill="none" stroke="#fff" stroke-width="6" stroke-linecap="round"/></svg>
                    <button class="lang">英</button>
                    <button aria-label="标点"><svg width="22" height="22"><circle cx="7" cy="6" r="3" fill="#1b72c8"/><path d="M14 11c5-2 6 6-1 9 2-3 2-4 1-9z" fill="#1b72c8"/></svg></button>
                    <button aria-label="表情"><svg width="24" height="24" fill="none" stroke="#1b72c8"><circle cx="12" cy="12" r="10" stroke-width="3"/><path d="M7 14c2 5 8 5 10 0M9 7v4M15 7v4" stroke-width="2"/></svg></button>
                    <button aria-label="语音"><svg width="20" height="24" fill="none" stroke="#1b72c8"><rect x="6" y="1" width="8" height="14" rx="4" fill="#1b72c8"/><path d="M2 10c0 11 16 11 16 0M10 18v5M5 23h10" stroke-width="2"/></svg></button>
                    <button aria-label="键盘"><svg width="24" height="20"><rect x="1" y="2" width="22" height="16" rx="2" fill="none" stroke="#1b72c8" stroke-width="2"/><path d="M4 6h16M4 10h16" stroke="#1b72c8" stroke-width="2" stroke-dasharray="2 1"/><path d="M5 14h14" stroke="#1b72c8" stroke-width="2"/></svg></button>
                    <button aria-label="用户"><svg width="28" height="26"><circle cx="9" cy="6" r="5" fill="#b9bdcb"/><path d="M1 22c0-13 15-12 16-5v5z" fill="#b9bdcb"/><text x="10" y="22" class="badge">1G</text></svg></button>
                    <button aria-label="皮肤"><svg width="24" height="22"><path d="M6 1c3 3 7 3 10 0l7 5-3 6-3-1v10H5V11l-3 1-2-6z" fill="#1b72c8"/></svg></button>
                    <button aria-label="工具箱"><svg width="20" height="20"><path d="M0 0h9v9H0zM0 11h9v9H0zM11 11h9v9h-9z" fill="#1b72c8"/><path d="M12 1h7v7h-7z" fill="none" stroke="#1b72c8" stroke-width="2"/></svg></button>
                </div>
                <button class="on" aria-label="快捷特性"><svg width="24" height="24"><circle cx="12" cy="12" r="11" fill="none" stroke="#fff"/><path d="M7 19l12-13-8 13z" fill="#fff"/></svg></button>
                <button class="wide split" aria-label="单位"><svg width="26" height="22"><path d="M6 1h19v11H6zM6 10l-4 8" fill="none" stroke="#ddd"/><path d="M0 15l5 1-4 5z" fill="#ddd"/><text x="8" y="10" class="units">X.0</text></svg></button>
                <button class="wide" aria-label="图形文件"><svg width="34" height="34"><path d="M1 0h19l7 8v24H1z" fill="#55a4e5"/><path d="M19 0v9h8z" fill="#fff"/><path d="M1 25c6-7 10-4 17 6v2H1z" fill="#ffe05c"/><path d="M5 8h6v6H5zM8 0v8M8 14v8M0 11h5M11 11h8" fill="none" stroke="#fff" stroke-width="2"/><path d="M17 26l5 5 9-10" fill="none" stroke="#2c9250" stroke-width="4"/></svg></button>
                <button class="wide" aria-label="性能"><svg width="26" height="26"><path d="M1 1h22v19H1z" fill="#eee"/><path d="M1 16L7 5l5 10 6-11 5 6" fill="none" stroke="#4178b8"/><path d="M18 11l7 14H11z" fill="#ef7a34"/><path d="M18 16v5M18 22v2" stroke="#fff"/></svg></button>
                <button class="wide" aria-label="隔离对象"><svg width="26" height="20"><path d="M1 1h9v10h15v8H1z" fill="none" stroke="#eca385"/></svg></button>
                <button class="wide split" aria-label="全屏显示"><svg width="24" height="20"><path d="M1 1h22v18H1z" fill="none" stroke="#ddd"/><path d="M20 3v6l-6-6zM4 17v-6l6 6z" fill="#ddd"/></svg></button>
                <button class="wide" aria-label="自定义状态栏"><svg width="24" height="24"><path d="M0 3h24M0 12h24M0 21h24" stroke="#ddd" stroke-width="2"/></svg></button>
            </div>
        </footer>
    </div>
</body>
</html>
```
FILE: styles.css
```css
* {
    box-sizing: border-box;
}

body {
    margin: 0;
    padding: 8px;
    background: #fafafa;
    font-family: "Noto Sans", "Noto Sans CJK SC", sans-serif;
    font-size: 18px;
    font-weight: 300;
    line-height: 24px;
    color: #f0f0f0;
}

button,
input,
select {
    font: inherit;
    color: inherit;
    background: none;
    border: none;
    padding: 0;
    margin: 0;
    white-space: nowrap;
}

svg {
    display: block;
    flex: none;
}

.defs {
    position: absolute;
}

.app {
    position: relative;
    display: flex;
    flex-direction: column;
    height: calc(100vh - 16px);
    background: #363636;
    box-shadow: 0 0 6px 1px #77777b;
}

/* small triangle used by every drop-down */
.caret {
    flex: none;
    width: 0;
    height: 0;
    border: 4px solid transparent;
    border-top: 5px solid #fff;
    border-bottom: 0;
}

.caret.dark {
    border-top-color: #333;
    border-width: 6px 6px 0;
}

.caret.dim {
    border-top-color: #c0c0c0;
}

.caret.mid {
    border-top-color: #888;
}

.caret.up {
    border: 5px solid transparent;
    border-bottom: 6px solid #333;
    border-top: 0;
}

/* Title bar */
.app-menu {
    position: absolute;
    left: 0;
    top: 0;
    z-index: 2;
    width: 60px;
    height: 58px;
    display: flex;
    gap: 4px;
    padding: 1px 0 0 4px;
    background: linear-gradient(#b5b5b5, #555);
    border: solid #111;
    border-width: 0 2px 2px 0;
}

.app-menu .caret {
    margin-top: 24px;
}

.titlebar {
    display: flex;
    flex: none;
    height: 35px;
    background: linear-gradient(#8a8a8a, #777);
    border-bottom: 1px solid #333;
}

.quick {
    display: flex;
    align-items: center;
    gap: 12px;
    padding: 0 10px 0 73px;
    border-right: 2px solid #444;
}

.quick .caret {
    margin: 0 -2px;
}

.quick .narrow {
    margin-left: 3px;
}

.tool {
    display: flex;
    align-items: center;
    justify-content: center;
}

.title {
    flex: 0 0 29%;
    margin: 0;
    padding-left: 87px;
    background: #fff;
    color: #111;
    font-size: 18px;
    font-weight: 400;
    line-height: 34px;
    white-space: nowrap;
    overflow: hidden;
}

.search {
    flex: 1;
    padding-left: 22px;
}

.search input {
    width: 100%;
    height: 33px;
    background: #757575;
    border: 2px solid #333;
}

.account {
    flex: 0 0 355px;
    display: flex;
    align-items: center;
    gap: 10px;
    padding: 0 12px 0 6px;
    background: linear-gradient(#aaa, #777);
    border-right: 1px solid #444;
}

.login {
    display: flex;
    align-items: center;
    gap: 6px;
}

.push {
    margin-left: auto;
    margin-right: 6px;
}

.rule {
    width: 1px;
    height: 22px;
    margin: 0 2px;
    background: #999;
}

.window-buttons {
    flex: 0 0 267px;
    display: flex;
    align-items: center;
    justify-content: space-between;
    padding: 0 28px 0 83px;
    background: #fff;
}

.notice {
    position: absolute;
    z-index: 3;
    left: 690px;
    top: 0;
    margin: 0;
    padding: 0 3px;
    background: #555;
    color: #ddd;
    font-weight: 700;
    line-height: 22px;
    height: 24px;
    white-space: nowrap;
}

.notice span {
    font-family: "Liberation Mono", monospace;
    font-size: 15px;
}

/* Menu bar */
.menubar {
    flex: none;
    display: flex;
    gap: 33px;
    height: 32px;
    padding: 0 4px 0 76px;
    background: linear-gradient(#a5a5a5, #606060);
    border-bottom: 2px solid #333;
    color: #fff;
}

.doc-buttons {
    margin-left: auto;
    display: flex;
    align-items: center;
    gap: 7px;
}

/* Ribbon tabs */
.tabs {
    flex: none;
    display: flex;
    align-items: flex-end;
    height: 30px;
    padding-left: 5px;
    background: #545454;
    border-bottom: 2px solid #2f2f2f;
    color: #d0d0d0;
}

.tabs button {
    height: 25px;
    padding: 0 15px;
    line-height: 22px;
}

.tabs .current {
    margin-right: 3px;
    background: linear-gradient(#777, #5e5e5e);
    border: 1px solid #333;
    border-bottom: 0;
    color: #fff;
}

.tabs .context {
    height: 22px;
    margin: 0 20px 3px 5px;
    padding: 0 12px;
    line-height: 20px;
    background: #707478;
    border: 1px solid #3c6ea5;
    color: #fff;
}

.tabs .fold {
    display: flex;
    align-items: center;
    gap: 7px;
}

/* Ribbon panels */
.ribbon {
    flex: none;
    display: flex;
    height: 147px;
    background: linear-gradient(#505050, #363636);
    border-bottom: 2px solid #999;
}

.panel {
    display: flex;
    flex-direction: column;
    flex: none;
    margin-bottom: 1px;
    background: #5b5b5b;
    border-right: 2px solid #424242;
}

.panel-body {
    flex: 1;
    display: flex;
    padding: 5px 4px 0;
}

.panel footer {
    display: flex;
    align-items: center;
    justify-content: center;
    gap: 9px;
    height: 27px;
    margin-left: 2px;
    background: linear-gradient(#565656, #494949);
    color: #fff;
}

.panel footer .caret {
    border-width: 6px 6px 0;
}

/* label in the middle, launcher at the right edge */
.panel .ends::before {
    content: "";
    flex: 1;
}

.end {
    flex: 1;
    display: flex;
    justify-content: flex-end;
    padding-right: 5px;
}

.launcher {
    width: 8px;
    height: 8px;
    border: solid #fff;
    border-width: 0 2px 2px 0;
    background: linear-gradient(to bottom left, transparent 40%, #fff 41%, #fff 58%, transparent 59%);
}

.big {
    display: flex;
    flex-direction: column;
    align-items: center;
    gap: 5px;
    padding-top: 5px;
    line-height: 24px;
}

.modeling {
    width: 204px;
}

.modeling .panel-body {
    padding-left: 10px;
    padding-right: 2px;
}

.modeling .big {
    flex: 1;
}

.mesh {
    width: 101px;
}

.mesh .panel-body {
    padding: 5px 2px 0 4px;
}

.mesh .ends::before {
    flex: 0 0 12px;
}

.mesh .big {
    width: 56px;
}

.icons {
    display: grid;
    grid-auto-rows: 36px;
    align-items: center;
    justify-items: center;
}

.one {
    grid-template-columns: 38px;
}

.three {
    grid-template-columns: 39px 39px 39px 16px;
}

.five {
    grid-template-columns: repeat(5, 39px) 16px;
}

.coords {
    grid-template-columns: 38px 20px repeat(4, 38px);
}

.coords .combo {
    grid-column: 3 / 7;
    width: 150px;
}

.coords > .caret {
    margin-right: 12px;
}

.line svg {
    fill: none;
    stroke: #ddd;
}

.line .dot {
    fill: #7fc1fc;
    stroke: none;
}

.modify .panel-body {
    padding-left: 1px;
}

.solid {
    width: 143px;
}

.draw {
    width: 142px;
}

.draw .panel-body {
    padding-left: 3px;
}

.modify {
    width: 218px;
}

.section-plane {
    width: 92px;
}

.section-plane .big {
    flex: 1;
}

.ucs {
    width: 218px;
}

.ucs .panel-body {
    padding-right: 0;
}

.combo {
    display: flex;
    align-items: center;
    gap: 3px;
    height: 32px;
    padding: 0 2px;
    background: linear-gradient(#6d6d6d, #505050);
    border: 2px solid #333;
    color: #fff;
}

.combo select {
    flex: 1;
    min-width: 0;
    appearance: none;
    overflow: hidden;
}

.combo .caret {
    border-width: 6px 6px 0;
}

.view {
    width: 157px;
}

.view .panel-body {
    flex-direction: column;
    gap: 4px;
    padding: 7px 2px 0 4px;
}

.with-caret {
    display: flex;
    align-items: center;
    gap: 8px;
    padding: 3px 5px;
}

.selection {
    width: 256px;
}

.selection .panel-body {
    gap: 12px;
    padding: 4px 2px 0 3px;
}

.selection .big {
    flex: none;
}

.selection .big:nth-child(2) {
    width: 84px;
}

.pressed {
    width: 56px;
    height: 108px;
    background: linear-gradient(#7ea6df, #4a6593);
    border: 1px solid #2b4478;
}

.selection .gizmo {
    position: relative;
    width: 84px;
}

.gizmo .caret {
    position: absolute;
    right: 2px;
    top: 80px;
}

.folded {
    padding: 2px 3px 1px 2px;
    background: #444;
    border-color: #555;
}

.folded button {
    display: flex;
    flex-direction: column;
    align-items: center;
    flex: 1;
    width: 85px;
    padding: 5px 0 6px;
    background: linear-gradient(#707070, #505050);
    border: 1px solid #333;
}

.folded .caret {
    margin-top: auto;
    margin-bottom: 1px;
    border-width: 6px 6px 0;
}

.base {
    width: 90px;
    border-right: 0;
}

.base .big {
    flex: 1;
}

/* Open drawings */
.file-tabs {
    flex: none;
    display: flex;
    align-items: flex-end;
    height: 44px;
    padding-left: 16px;
    border-bottom: 6px solid #5a5a5a;
}

.file-tab {
    display: flex;
    align-items: center;
    gap: 32px;
    height: 33px;
    padding: 0 30px;
    background: linear-gradient(#777, #5a5a5a);
    clip-path: polygon(0 100%, 5% 85%, 9% 12%, 12% 0, 89% 0, 92% 12%, 96% 85%, 100% 100%);
}

.new-tab {
    display: flex;
    align-items: center;
    justify-content: center;
    width: 30px;
    height: 22px;
    margin-bottom: 4px;
    background: #555;
    border-radius: 2px 12px 2px 12px;
}

/* Drawing area */
.canvas {
    position: relative;
    flex: 1;
    background: #8a8a8a;
    overflow: hidden;
}

.paper {
    position: absolute;
    left: 472px;
    top: 30px;
    box-shadow: 0 0 4px 1px #6d6d6d;
}

.stamp {
    fill: none;
    stroke: #f7f7f7;
    font-size: 67px;
    font-weight: 400;
}

.mark {
    fill: #000;
    stroke: none;
    font-size: 20px;
    font-family: "Liberation Sans", sans-serif;
    text-anchor: middle;
}

.size {
    fill: #000;
    stroke: none;
    font-size: 10px;
    font-family: "Liberation Sans", sans-serif;
    text-anchor: middle;
}

.ucs-icon {
    position: absolute;
    left: 0;
    bottom: 0;
}

.navbar {
    position: absolute;
    right: 16px;
    top: 3px;
    width: 48px;
    height: 192px;
    display: flex;
    flex-direction: column;
    align-items: center;
    gap: 8px;
    padding: 1px 3px;
    background: #a0a0a0;
    border: 2px solid #707070;
    border-radius: 4px;
}

.navbar .mini {
    align-self: flex-end;
}

.navbar .mini:last-child {
    margin-top: auto;
}

.navbar .caret {
    border-top-color: #777;
}

.two-d {
    fill: #8685a8;
    font-size: 13px;
    font-weight: 700;
}

.edge {
    position: absolute;
    right: 0;
    top: 0;
    bottom: 0;
    width: 14px;
    background: linear-gradient(to right, #b5cdef 0 7px, #6fd0ff 7px 10px, #111 10px 11px, #555 11px);
}

.meter {
    position: absolute;
    top: 329px;
    width: 14px;
    height: 88px;
    padding: 10px 0 10px 6px;
    background: #35455c;
    border-radius: 6px 0 0 6px;
}

.meter::before {
    content: "";
    display: block;
    width: 6px;
    height: 68px;
    background: repeating-linear-gradient(transparent 0 2px, #35455c 2px 3px), linear-gradient(#26354c 35%, #e0c63c 35%, #b8d36a 60%, #3cc9c0);
}

.command {
    position: absolute;
    left: 366px;
    right: 366px;
    bottom: 2px;
    height: 37px;
    display: flex;
    align-items: center;
    gap: 12px;
    padding-left: 11px;
    background: linear-gradient(#777, #505050);
    border: 1px solid #777;
    border-radius: 3px;
}

.grip {
    height: 26px;
    margin-right: -4px;
    border-left: 2px dotted #bbb;
}

.entry {
    flex: 1;
    display: flex;
    align-items: center;
    gap: 5px;
    height: 35px;
    margin-left: -4px;
    padding: 0 5px 0 8px;
    background: #dcdcdc;
    border-radius: 2px;
}

.entry input {
    flex: 1;
    padding-left: 8px;
    font-size: 20px;
    font-style: italic;
    color: #333;
}

.entry input::placeholder {
    color: #8c8c8c;
}

/* Layout tabs and status bar */
.bottom {
    flex: none;
    display: flex;
    justify-content: space-between;
    height: 40px;
    background: #363636;
}

.layouts {
    display: flex;
    align-items: flex-start;
    padding-left: 19px;
}

.layouts button {
    height: 27px;
    margin-left: -6px;
    padding: 0 21px 0 20px;
    line-height: 26px;
    background: linear-gradient(#505050, #5c5c5c);
    clip-path: polygon(0 0, 6% 12%, 15% 90%, 18% 100%, 80% 100%, 84% 90%, 94% 12%, 100% 0);
    color: #ccc;
}

.layouts .current {
    background: linear-gradient(#5c5c5c, #8b8b8b);
    color: #fff;
    font-weight: 700;
}

.layouts .add {
    width: 34px;
    height: 24px;
    padding: 0 11px;
    margin: 1px 0 0 4px;
    clip-path: none;
    border-radius: 12px 2px 12px 2px;
}

.status {
    display: flex;
    height: 40px;
    padding-top: 2px;
    background: #4b4b4b;
    border-top: 2px solid #666;
}

.status > button {
    display: flex;
    align-items: center;
    justify-content: center;
    width: 37px;
    border: 1px solid #4b4b4b;
}

.status > .wide {
    width: 40px;
}

.status > .on {
    background: #5a8cc5;
}

.status > .split {
    border-left: 2px solid #777;
}

.status > .caret {
    align-self: center;
    margin: 0 6px;
    border-width: 7px 5px 0;
}

.status > .readout {
    width: 232px;
    border: 2px solid #777;
    border-bottom: 0;
    font-size: 17px;
    font-weight: 400;
    color: #fff;
}

.status > .space {
    width: 46px;
    border: 2px solid #777;
    border-bottom: 0;
    font-size: 17px;
    font-weight: 400;
    color: #fff;
}

.ime {
    position: relative;
    flex: none;
    display: flex;
    align-items: center;
    justify-content: space-between;
    width: 291px;
    padding: 0 6px 0 34px;
    background: #fff;
}

.logo {
    position: absolute;
    left: -14px;
    top: -4px;
}

.lang {
    color: #1b72c8;
    font-size: 22px;
    font-weight: 700;
}

.badge {
    fill: #a2a7b8;
    stroke: #fff;
    stroke-width: 2px;
    paint-order: stroke;
    font-size: 11px;
    font-weight: 700;
}

.units {
    fill: #ddd;
    font-size: 9px;
    font-weight: 700;
}
```
